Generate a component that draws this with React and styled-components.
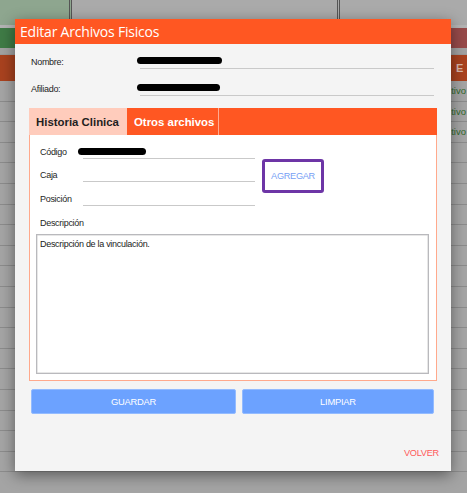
import React from 'react';
import styled, { createGlobalStyle } from 'styled-components';

const GlobalStyle = createGlobalStyle`
  html, body {
    margin: 0;
    padding: 0;
    background: #a4a4a4;
    font-family: "Liberation Sans", Arial, sans-serif;
    overflow: hidden;
  }
`;

const Screen = styled.div`
  position: relative;
  width: 467px;
  height: 493px;
  overflow: hidden;
  background: #a4a4a4;
`;

/* ---------- dimmed page behind the modal ---------- */

const TopRow = styled.div`
  display: grid;
  grid-template-columns: 72px 268px 1fr;
  height: 25px;
  border-bottom: 3px solid #b4b4b4;
`;

const TopCell = styled.div`
  background: ${(p) => p.$bg || '#aaaaaa'};
  border-right: ${(p) => (p.$line ? '3px double #555' : 'none')};
`;

const Band = styled.div`
  display: flex;
  justify-content: space-between;
  height: ${(p) => p.$h}px;
`;

const BandPart = styled.div`
  width: ${(p) => p.$w}px;
  background: ${(p) => p.$bg};
  color: #d9b7ab;
  font-size: 11px;
  font-weight: bold;
  display: flex;
  align-items: center;
  padding-left: ${(p) => p.$pl || 0}px;
  box-sizing: border-box;
`;

const Gap = styled.div`
  height: ${(p) => p.$h}px;
  background: #a2a2a2;
  border-bottom: 1px solid #9a9a9a;
`;

const Row = styled.div`
  height: 19.6px;
  border-bottom: 1px solid #8c8c8c;
  background: #a5a5a5;
  display: flex;
  justify-content: flex-end;
  align-items: center;
  font-size: 9.5px;
  color: #2f6a2c;
  padding-right: 1px;
  white-space: nowrap;
`;

/* ---------- modal ---------- */

const Modal = styled.div`
  position: absolute;
  left: 15px;
  top: 19px;
  width: 436px;
  height: 452px;
  background: #f4f4f4;
  box-shadow: 0 4px 14px rgba(0, 0, 0, 0.45);
  display: flex;
  flex-direction: column;
`;

const Header = styled.div`
  height: 25px;
  background: #ff5722;
  color: #ffffff;
  font-family: "Open Sans", sans-serif;
  font-size: 14px;
  line-height: 25px;
  padding-left: 5px;
  letter-spacing: -0.2px;
`;

const Body = styled.div`
  flex: 1;
  padding: 0 14px;
  display: flex;
  flex-direction: column;
`;

const FieldRow = styled.div`
  display: flex;
  align-items: flex-end;
  height: ${(p) => p.$h}px;
  padding-left: 2px;
  padding-right: 3px;
`;

const Label = styled.div`
  width: ${(p) => p.$w}px;
  font-size: 9px;
  letter-spacing: -0.3px;
  color: #1e1e1e;
  padding-bottom: 2px;
  flex-shrink: 0;
`;

const LineInput = styled.div`
  flex: ${(p) => (p.$w ? 'none' : 1)};
  width: ${(p) => (p.$w ? `${p.$w}px` : 'auto')};
  height: 20px;
  border-bottom: 1.5px solid #c9c9c9;
  position: relative;
`;

const Redacted = styled.span`
  position: absolute;
  left: ${(p) => p.$l}px;
  top: ${(p) => p.$t}px;
  width: ${(p) => p.$w}px;
  height: 7px;
  border-radius: 4px;
  background: #000;
`;

const Panel = styled.div`
  margin-top: 12px;
  display: flex;
  flex-direction: column;
`;

const TabBar = styled.div`
  display: flex;
  height: 27px;
  background: #ff5722;
`;

const Tab = styled.div`
  width: ${(p) => p.$w}px;
  background: ${(p) => (p.$active ? '#ffccbc' : '#ff5722')};
  color: ${(p) => (p.$active ? '#1f1f1f' : '#ffffff')};
  border-right: ${(p) => (p.$active ? 'none' : '1px solid #ffab91')};
  font-weight: bold;
  font-size: 11.4px;
  line-height: 28px;
  padding-left: 7px;
  box-sizing: border-box;
  white-space: nowrap;
`;

const PanelBody = styled.div`
  height: 246px;
  background: #ffffff;
  border: 1px solid #ffa98c;
  border-top: none;
  box-sizing: border-box;
  padding: 0 7px 0 6px;
  display: flex;
  flex-direction: column;
`;

const FormGrid = styled.div`
  display: flex;
  align-items: flex-start;
`;

const FieldCol = styled.div`
  display: flex;
  flex-direction: column;
  padding-left: 4px;
`;

const SmallRow = styled.div`
  display: flex;
  align-items: flex-end;
  height: 23.5px;
`;

const AddBox = styled.div`
  margin-left: 7px;
  margin-top: 24px;
  width: 62px;
  height: 34px;
  border: 3.5px solid #6d35a6;
  border-radius: 3px;
  box-sizing: border-box;
  background: #ffffff;
  display: flex;
  align-items: center;
  justify-content: center;
`;

const LinkButton = styled.span`
  color: #779ff5;
  font-size: 9.2px;
  letter-spacing: -0.3px;
`;

const DescLabel = styled.div`
  font-size: 9px;
  letter-spacing: -0.3px;
  color: #1e1e1e;
  padding-left: 4px;
  margin-top: 12px;
`;

const TextArea = styled.div`
  margin-top: 6px;
  height: 140px;
  border: 1px solid #b9b9bd;
  box-shadow: inset 0 0 0 0.5px #d0d0d0;
  padding: 4px 3px;
  font-size: 9px;
  letter-spacing: -0.3px;
  color: #1a1a1a;
  box-sizing: border-box;
`;

const Buttons = styled.div`
  display: flex;
  gap: 6px;
  margin-top: 8px;
  padding: 0 3px 0 2px;
`;

const Button = styled.div`
  flex: ${(p) => p.$flex};
  height: 25px;
  background: #6ca2ff;
  border: 1px solid #93bbff;
  border-radius: 2px;
  box-sizing: border-box;
  color: #ffffff;
  font-size: 9.4px;
  letter-spacing: -0.25px;
  display: flex;
  align-items: center;
  justify-content: center;
`;

const Footer = styled.div`
  margin-top: auto;
  padding: 0 12px 13px 0;
  display: flex;
  justify-content: flex-end;
`;

const BackLink = styled.span`
  color: #ff5a5a;
  font-size: 9.2px;
  letter-spacing: -0.25px;
`;

const rows = ['Activo', 'Activo', 'Activo', '', '', '', '', '', '', '', '', '', '', '', '', '', '', '', ''];

export default function App() {
  return (
    <Screen>
      <GlobalStyle />
      <TopRow>
        <TopCell $bg="#8ea68f" $line />
        <TopCell $line />
        <TopCell />
      </TopRow>
      <Band $h={20}>
        <BandPart $w={72} $bg="#3f7b46" />
        <BandPart $w={20} $bg="#974a4a" />
      </Band>
      <Gap $h={6} />
      <Band $h={26}>
        <BandPart $w={72} $bg="#a9421f" />
        <BandPart $w={20} $bg="#a9421f" $pl={9}>E</BandPart>
      </Band>
      {rows.map((r, i) => (
        <Row key={i}>{r}</Row>
      ))}

      <Modal>
        <Header>Editar Archivos Fisicos</Header>
        <Body>
          <FieldRow $h={25}>
            <Label $w={109}>Nombre:</Label>
            <LineInput>
              <Redacted $l={-3} $t={9} $w={85} />
            </LineInput>
          </FieldRow>
          <FieldRow $h={27}>
            <Label $w={109}>Afiliado:</Label>
            <LineInput>
              <Redacted $l={-3} $t={9} $w={83} />
            </LineInput>
          </FieldRow>

          <Panel>
            <TabBar>
              <Tab $w={98} $active>Historia Clinica</Tab>
              <Tab $w={92}>Otros archivos</Tab>
            </TabBar>
            <PanelBody>
              <FormGrid>
                <FieldCol>
                  <SmallRow>
                    <Label $w={43}>Código</Label>
                    <LineInput $w={172}>
                      <Redacted $l={-5} $t={10} $w={68} />
                    </LineInput>
                  </SmallRow>
                  <SmallRow>
                    <Label $w={43}>Caja</Label>
                    <LineInput $w={172} />
                  </SmallRow>
                  <SmallRow>
                    <Label $w={43}>Posición</Label>
                    <LineInput $w={172} />
                  </SmallRow>
                </FieldCol>
                <AddBox>
                  <LinkButton>AGREGAR</LinkButton>
                </AddBox>
              </FormGrid>
              <DescLabel>Descripción</DescLabel>
              <TextArea>Descripción de la vinculación.</TextArea>
            </PanelBody>
          </Panel>

          <Buttons>
            <Button $flex="205">GUARDAR</Button>
            <Button $flex="192">LIMPIAR</Button>
          </Buttons>
        </Body>
        <Footer>
          <BackLink>VOLVER</BackLink>
        </Footer>
      </Modal>
    </Screen>
  );
}
